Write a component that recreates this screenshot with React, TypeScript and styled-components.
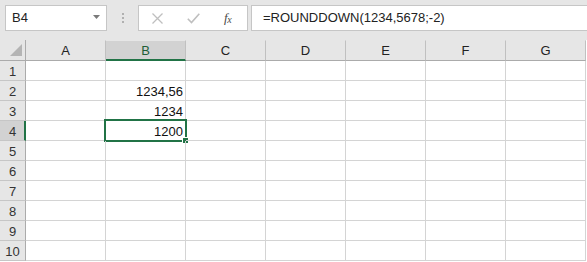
import React from "react";
import styled, { createGlobalStyle } from "styled-components";

const Global = createGlobalStyle`
  html, body { margin: 0; padding: 0; background: #ffffff; }
  body { width: 587px; height: 262px; overflow: hidden; font-family: "Liberation Sans", Arial, sans-serif; }
`;

const Page = styled.div`
  width: 587px;
  height: 262px;
  display: flex;
  flex-direction: column;
  background: #ffffff;
`;

const Toolbar = styled.div`
  height: 40px;
  box-sizing: border-box;
  padding: 5px 0 0 5px;
  background: #e6e6e6;
  display: flex;
  align-items: flex-start;
`;

const NameBox = styled.div`
  width: 102px;
  height: 26px;
  box-sizing: border-box;
  border: 1px solid #c6c6c6;
  background: #ffffff;
  display: flex;
  align-items: center;
  justify-content: space-between;
  padding: 0 5px 1px 6px;
  font-size: 13px;
  color: #222222;
`;

const Grip = styled.div`
  width: 31px;
  height: 26px;
  display: flex;
  flex-direction: column;
  align-items: center;
  justify-content: center;
  gap: 2px;
  padding-left: 1px;
  box-sizing: border-box;
  span {
    width: 2px;
    height: 2px;
    background: #b0b0b0;
  }
`;

const ButtonGroup = styled.div`
  width: 110px;
  height: 26px;
  box-sizing: border-box;
  border: 1px solid #c6c6c6;
  background: #ffffff;
  display: flex;
  align-items: center;
  padding-left: 13px;
`;

const IconSlot = styled.div<{ $w: number }>`
  width: ${(p) => p.$w}px;
  display: flex;
  align-items: center;
`;

const Fx = styled.span`
  font-family: "Liberation Serif", "Times New Roman", serif;
  font-style: italic;
  font-size: 13px;
  color: #4a4a4a;
  letter-spacing: -0.5px;
  sub {
    font-size: 10px;
    vertical-align: -1px;
  }
`;

const FormulaInput = styled.div`
  margin-left: 3px;
  flex: 1;
  height: 26px;
  box-sizing: border-box;
  border: 1px solid #c6c6c6;
  border-right: none;
  background: #ffffff;
  display: flex;
  align-items: center;
  padding: 0 0 1px 11px;
  font-size: 13px;
  color: #222222;
`;

const Sheet = styled.div`
  display: grid;
  grid-template-columns: 26px repeat(7, 80px);
  grid-template-rows: 21px repeat(10, 20px);
`;

const Corner = styled.div`
  background: #e6e6e6;
  border-right: 1px solid #ababab;
  border-bottom: 1px solid #ababab;
  box-sizing: border-box;
  display: flex;
  align-items: flex-end;
  justify-content: flex-end;
  padding: 0 3px 4px 0;
`;

const ColHeader = styled.div<{ $sel?: boolean }>`
  box-sizing: border-box;
  background: ${(p) => (p.$sel ? "#d2d2d2" : "#e6e6e6")};
  border-right: 1px solid #c0c0c0;
  border-top: 1px solid #e6e6e6;
  border-bottom: ${(p) => (p.$sel ? "2px solid #217346" : "1px solid #ababab")};
  display: flex;
  align-items: center;
  justify-content: center;
  padding-top: ${(p) => (p.$sel ? "1px" : "0")};
  font-size: 13px;
  color: ${(p) => (p.$sel ? "#1e5e37" : "#222222")};
`;

const RowHeader = styled.div<{ $sel?: boolean }>`
  box-sizing: border-box;
  background: ${(p) => (p.$sel ? "#d2d2d2" : "#e6e6e6")};
  border-right: ${(p) => (p.$sel ? "2px solid #217346" : "1px solid #ababab")};
  border-bottom: 1px solid #c6c6c6;
  display: flex;
  align-items: center;
  justify-content: center;
  padding: 1px 0 0 ${(p) => (p.$sel ? "1px" : "0")};
  font-size: 13px;
  color: #333333;
`;

const Cell = styled.div`
  position: relative;
  box-sizing: border-box;
  border-right: 1px solid #d4d4d4;
  border-bottom: 1px solid #d4d4d4;
  display: flex;
  align-items: center;
  justify-content: flex-end;
  padding: 2px 2px 0 0;
  font-size: 13px;
  color: #111111;
`;

const Selection = styled.div`
  position: absolute;
  left: -2px;
  top: -2px;
  width: 83px;
  height: 23px;
  box-sizing: border-box;
  border: 2px solid #217346;
  pointer-events: none;
`;

const Handle = styled.div`
  position: absolute;
  right: -3px;
  bottom: -3px;
  width: 5px;
  height: 5px;
  background: #217346;
  box-shadow: -1px -1px 0 #ffffff;
`;

const cols = ["A", "B", "C", "D", "E", "F", "G"];
const values: Record<string, string> = { B2: "1234,56", B3: "1234", B4: "1200" };

export default function App() {
  return (
    <Page>
      <Global />
      <Toolbar>
        <NameBox>
          <span>B4</span>
          <svg width="8" height="5" viewBox="0 0 8 5">
            <path d="M0 0 H7 L3.5 4 Z" fill="#7a7a7a" />
          </svg>
        </NameBox>
        <Grip>
          <span />
          <span />
          <span />
        </Grip>
        <ButtonGroup>
          <IconSlot $w={35}>
            <svg width="11" height="11" viewBox="0 0 11 11">
              <path d="M0.5 0.5 L10.5 10.5 M10.5 0.5 L0.5 10.5" stroke="#bfbfbf" strokeWidth="1.3" fill="none" />
            </svg>
          </IconSlot>
          <IconSlot $w={37}>
            <svg width="13" height="11" viewBox="0 0 13 11">
              <path d="M0.8 5.8 L4.5 9.5 L12.3 0.8" stroke="#bfbfbf" strokeWidth="1.6" fill="none" />
            </svg>
          </IconSlot>
          <IconSlot $w={20}>
            <Fx>
              f<sub>x</sub>
            </Fx>
          </IconSlot>
        </ButtonGroup>
        <FormulaInput>=ROUNDDOWN(1234,5678;-2)</FormulaInput>
      </Toolbar>
      <Sheet>
        <Corner>
          <svg width="12" height="12" viewBox="0 0 12 12">
            <path d="M12 0 V12 H0 Z" fill="#b4b4b4" />
          </svg>
        </Corner>
        {cols.map((c) => (
          <ColHeader key={c} $sel={c === "B"}>
            {c}
          </ColHeader>
        ))}
        {Array.from({ length: 10 }, (_, i) => i + 1).map((r) => (
          <React.Fragment key={r}>
            <RowHeader $sel={r === 4}>{r}</RowHeader>
            {cols.map((c) => {
              const id = `${c}${r}`;
              return (
                <Cell key={id}>
                  {values[id] ?? ""}
                  {id === "B4" && (
                    <Selection>
                      <Handle />
                    </Selection>
                  )}
                </Cell>
              );
            })}
          </React.Fragment>
        ))}
      </Sheet>
    </Page>
  );
}
